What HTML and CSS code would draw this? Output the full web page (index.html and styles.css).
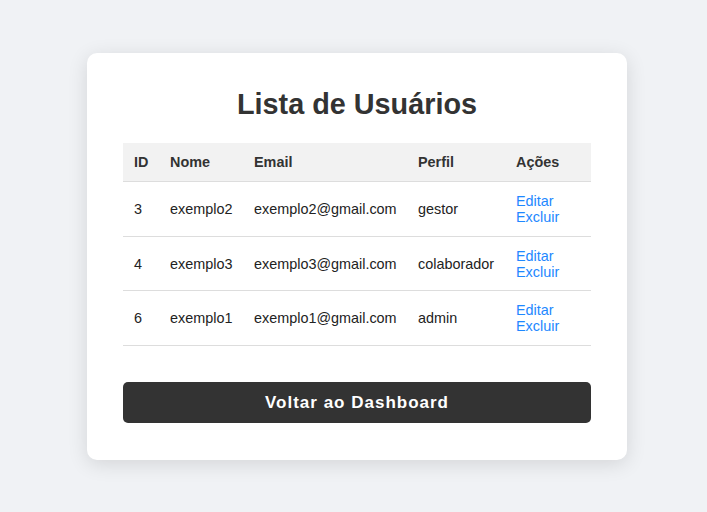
FILE: index.html
```html
<!DOCTYPE html>
<html lang="pt-BR">
<head>
<meta charset="utf-8">
<title>Lista de Usuários</title>
<link rel="stylesheet" href="styles.css">
</head>
<body>
<main class="page">
  <section class="card">
    <h1 class="title">Lista de Usuários</h1>
    <table class="users">
      <colgroup>
        <col class="c-id"><col class="c-nome"><col class="c-email"><col class="c-perfil"><col class="c-acoes">
      </colgroup>
      <thead>
        <tr><th>ID</th><th>Nome</th><th>Email</th><th>Perfil</th><th>Ações</th></tr>
      </thead>
      <tbody>
        <tr><td>3</td><td>exemplo2</td><td>exemplo2@gmail.com</td><td>gestor</td><td><a class="link" href="#">Editar</a><br><a class="link" href="#">Excluir</a></td></tr>
        <tr><td>4</td><td>exemplo3</td><td>exemplo3@gmail.com</td><td>colaborador</td><td><a class="link" href="#">Editar</a><br><a class="link" href="#">Excluir</a></td></tr>
        <tr><td>6</td><td>exemplo1</td><td>exemplo1@gmail.com</td><td>admin</td><td><a class="link" href="#">Editar</a><br><a class="link" href="#">Excluir</a></td></tr>
      </tbody>
    </table>
    <a class="back" href="#">Voltar ao Dashboard</a>
  </section>
</main>
</body>
</html>
```

FILE: styles.css
```css
html, body {
  margin: 0;
  padding: 0;
}
body {
  background: #f0f2f5;
  font-family: "Liberation Sans", Arial, sans-serif;
  color: #333;
}
.page {
  min-height: 512px;
  display: flex;
  align-items: center;
  justify-content: center;
  padding-left: 7px;
  padding-top: 1px;
  box-sizing: border-box;
}
.card {
  width: 540px;
  box-sizing: border-box;
  background: #fff;
  border-radius: 10px;
  padding: 35px 36px 37px;
  box-shadow: 0 4px 20px rgba(0, 0, 0, 0.12);
}
.title {
  margin: 0 0 22px;
  text-align: center;
  font-size: 28.8px;
  font-weight: bold;
  color: #333;
  line-height: 33px;
}
.users {
  width: 100%;
  border-collapse: collapse;
  table-layout: fixed;
  font-size: 14.4px;
}
.c-id { width: 36px; }
.c-nome { width: 84px; }
.c-email { width: 164px; }
.c-perfil { width: 98px; }
.c-acoes { width: 86px; }
.users th,
.users td {
  padding: 10.8px 11px;
  text-align: left;
  border-bottom: 1px solid #ddd;
  white-space: nowrap;
}
.users th {
  background: #f2f2f2;
  font-weight: bold;
  color: #333;
  padding-top: 11px;
  padding-bottom: 11px;
}
.users td {
  color: #222;
}
.link {
  color: #1e88ff;
  text-decoration: none;
}
.back {
  display: block;
  margin-top: 36px;
  height: 41px;
  line-height: 41px;
  background: #333;
  color: #fff;
  text-align: center;
  text-decoration: none;
  font-weight: bold;
  font-size: 17px;
  letter-spacing: 1px;
  border-radius: 5px;
}
```
